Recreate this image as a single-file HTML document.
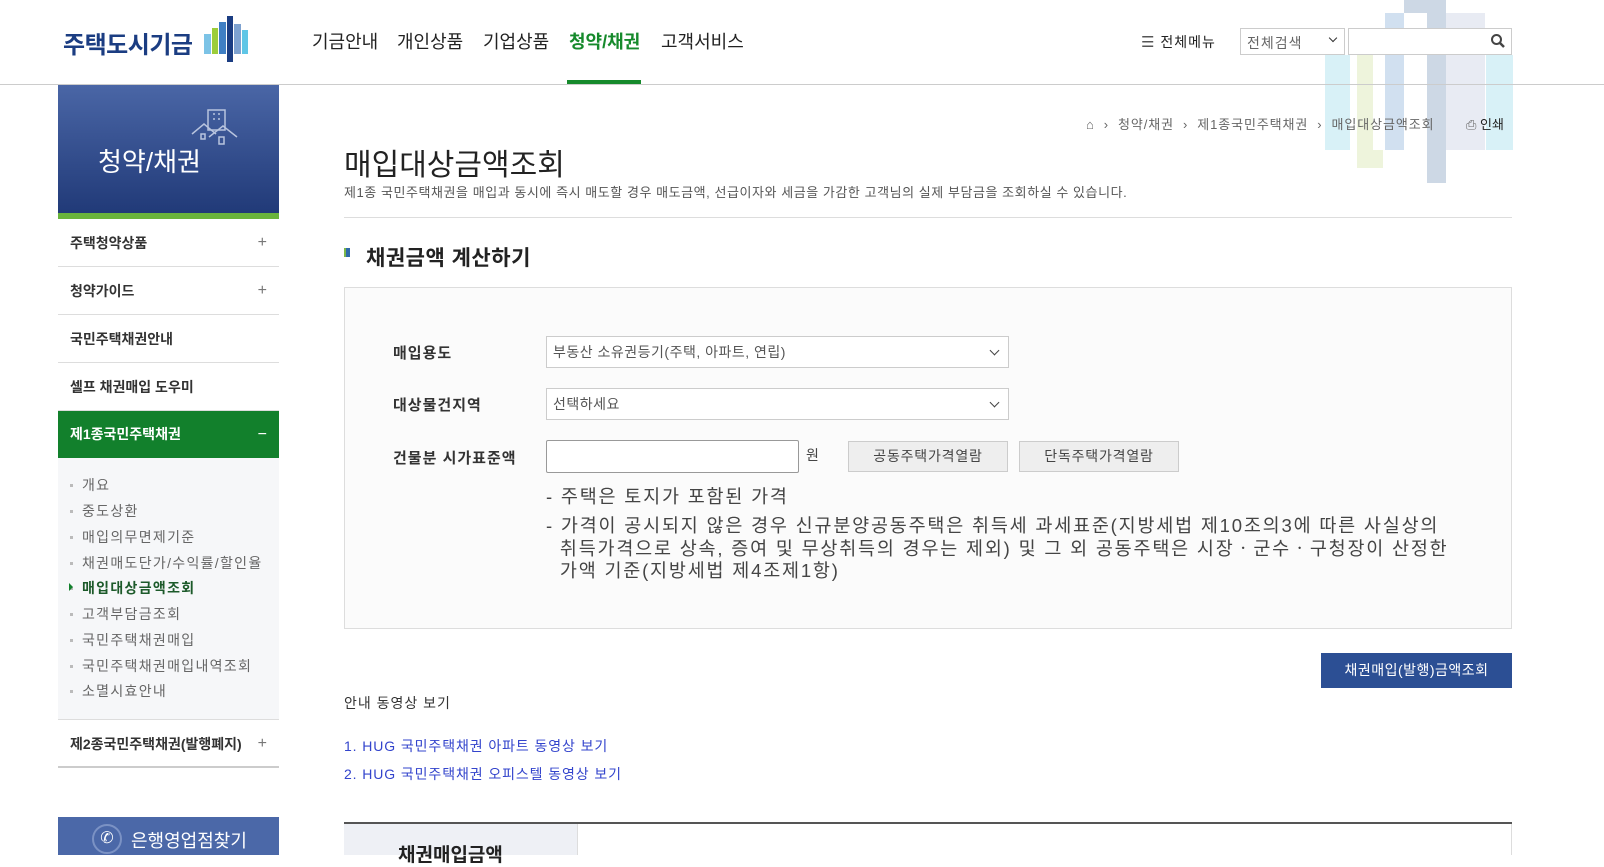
<!DOCTYPE html>
<html><head><meta charset="utf-8"><style>
*{margin:0;padding:0;box-sizing:border-box}
body{width:1604px;height:855px;overflow:hidden;background:#fff;font-family:"Liberation Sans","Noto Sans CJK KR",sans-serif;color:#333;position:relative}
.a{position:absolute;white-space:nowrap}
.bar{position:absolute}
.nav{font-size:18px;color:#222;top:28px}
.side{position:absolute;left:58px;width:221px}
.mi{position:absolute;left:58px;width:221px;height:48px;border-bottom:1px solid #ddd;font-size:14px;font-weight:bold;color:#333;padding-left:12px;line-height:48px}
.mi .p{position:absolute;right:12px;top:0;color:#777;font-weight:normal;font-size:16px}
.sub{position:absolute;left:70px;font-size:14px;color:#666;letter-spacing:1.3px}
.sub:before{content:"";position:absolute;left:0;top:9px;width:3px;height:3px;background:#bbb}
.sub span{margin-left:12px}
.sel{position:absolute;left:546px;width:463px;height:32px;border:1px solid #ccc;background:#fff;font-size:14px;color:#555;padding-left:6px;line-height:30px;letter-spacing:0.5px}
.sel:after{content:"";position:absolute;right:10px;top:10px;width:6px;height:6px;border-right:1.5px solid #444;border-bottom:1.5px solid #444;transform:rotate(45deg)}
.lbl{position:absolute;left:393px;font-size:15px;font-weight:bold;color:#333;letter-spacing:1px}
.btn{position:absolute;top:441px;height:31px;background:#eee;border:1px solid #ccc;font-size:14px;color:#444;text-align:center;line-height:29px}
.note{position:absolute;left:546px;font-size:18.5px;color:#444;line-height:22.5px;letter-spacing:1.8px;white-space:nowrap}
</style></head><body>
<div class="bar" style="left:1325px;top:55px;width:25px;height:95px;background:#d8f1f7"></div>
<div class="bar" style="left:1357px;top:55px;width:16px;height:113px;background:#eef4dc"></div>
<div class="bar" style="left:1373px;top:150px;width:10px;height:18px;background:#eef4dc"></div>
<div class="bar" style="left:1385px;top:13px;width:19px;height:137px;background:#d1e0f0"></div>
<div class="bar" style="left:1404px;top:0;width:42px;height:13px;background:#cdd8e5"></div>
<div class="bar" style="left:1427px;top:0;width:19px;height:183px;background:#cdd8e5"></div>
<div class="bar" style="left:1446px;top:13px;width:39px;height:137px;background:#e8ebf3"></div>
<div class="bar" style="left:1486px;top:55px;width:27px;height:95px;background:#d8f1f7"></div>

<div class="a" style="left:63px;top:25px;font-size:24px;font-weight:bold;color:#1b3d82;letter-spacing:-0.5px">주택도시기금</div>
<div class="bar" style="left:204px;top:34px;width:7px;height:20px;background:#7cc3e6"></div>
<div class="bar" style="left:212px;top:28px;width:6px;height:26px;background:#9ccd3a"></div>
<div class="bar" style="left:219px;top:22px;width:7px;height:32px;background:#3f7fc4"></div>
<div class="bar" style="left:227px;top:16px;width:6px;height:46px;background:#1b3d82"></div>
<div class="bar" style="left:234px;top:24px;width:7px;height:30px;background:#7ea2d0"></div>
<div class="bar" style="left:242px;top:30px;width:6px;height:24px;background:#5fc6e6"></div>
<div class="a nav" style="left:312px">기금안내</div>
<div class="a nav" style="left:397px">개인상품</div>
<div class="a nav" style="left:483px">기업상품</div>
<div class="a nav" style="left:569px;color:#168a2c;font-weight:bold">청약/채권</div>
<div class="a nav" style="left:661px">고객서비스</div>
<div class="bar" style="left:567px;top:80px;width:74px;height:4px;background:#168a2c"></div>
<div class="bar" style="left:0;top:84px;width:1604px;height:1px;background:#ccc"></div>
<div class="a" style="left:1141px;top:32px;font-size:14px;color:#222;letter-spacing:1px"><span style="font-size:15px;color:#555">☰</span> 전체메뉴</div>
<div class="bar" style="left:1240px;top:28px;width:105px;height:27px;border:1px solid #ccc;background:#fff;font-size:14px;color:#666;padding:4px 6px;letter-spacing:1px">전체검색<span style="position:absolute;right:8px;top:6px;width:6px;height:6px;border-right:1.5px solid #333;border-bottom:1.5px solid #333;transform:rotate(45deg)"></span></div>
<div class="bar" style="left:1348px;top:28px;width:164px;height:27px;border:1px solid #ccc;background:#fff"></div>
<svg class="bar" style="left:1490px;top:33px" width="16" height="16" viewBox="0 0 16 16"><circle cx="6.5" cy="6.5" r="4.5" fill="none" stroke="#444" stroke-width="2"/><path d="M10 10l4 4" stroke="#444" stroke-width="2.5"/></svg>

<div class="side" style="top:85px;height:128px;background:linear-gradient(#4a66a6,#213a78)"></div>
<div class="side" style="top:213px;height:6px;background:#6ab43c"></div>
<div class="a" style="left:98px;top:142px;font-size:26px;color:#fff">청약/채권</div>
<svg class="bar" style="left:190px;top:108px" width="55" height="45" viewBox="0 0 55 45" fill="none" stroke="#b8c4de" stroke-width="1.5"><rect x="18" y="2" width="17" height="20"/><path d="M23 6h2M28 6h2M23 11h2M28 11h2"/><path d="M2 26l12-10 12 10"/><path d="M19 29l14-11 14 11"/><path d="M11 26h4v5h-4zM29 29h5v7h-5z"/></svg>
<div class="mi" style="top:219px">주택청약상품<span class="p">+</span></div>
<div class="mi" style="top:267px">청약가이드<span class="p">+</span></div>
<div class="mi" style="top:315px">국민주택채권안내</div>
<div class="mi" style="top:363px">셀프 채권매입 도우미</div>
<div class="mi" style="top:411px;background:#12802c;color:#fff;border:none;height:47px;line-height:47px">제1종국민주택채권<span class="p" style="color:#fff">−</span></div>
<div class="side" style="top:458px;height:262px;background:#f6f7f9;border-bottom:1px solid #ddd"></div>
<div class="sub" style="top:475px"><span>개요</span></div>
<div class="sub" style="top:501px"><span>중도상환</span></div>
<div class="sub" style="top:527px"><span>매입의무면제기준</span></div>
<div class="sub" style="top:553px"><span>채권매도단가/수익률/할인율</span></div>
<div class="sub" style="top:578px;color:#1c5a2a;font-weight:bold"><span>매입대상금액조회</span></div>
<div class="a" style="left:69px;top:583px;width:0;height:0;border-left:4px solid #12802c;border-top:4px solid transparent;border-bottom:4px solid transparent"></div>
<div class="sub" style="top:604px"><span>고객부담금조회</span></div>
<div class="sub" style="top:630px"><span>국민주택채권매입</span></div>
<div class="sub" style="top:656px"><span>국민주택채권매입내역조회</span></div>
<div class="sub" style="top:681px"><span>소멸시효안내</span></div>
<div class="mi" style="top:720px;border-bottom:2px solid #ccc">제2종국민주택채권(발행폐지)<span class="p">+</span></div>
<div class="side" style="top:817px;height:38px;background:#4b68a8"></div>
<div class="a" style="left:92px;top:824px;width:30px;height:30px;border-radius:50%;border:2px solid #7b92c4;color:#fff;font-size:16px;text-align:center;line-height:26px">✆</div>
<div class="a" style="left:131px;top:827px;font-size:18px;color:#fff">은행영업점찾기</div>

<div class="a" style="left:1086px;top:114px;font-size:13px;color:#666;letter-spacing:0.9px">⌂ &nbsp;›&nbsp; 청약/채권 &nbsp;›&nbsp; 제1종국민주택채권 &nbsp;›&nbsp; 매입대상금액조회</div>
<div class="a" style="left:1466px;top:114px;font-size:13px;color:#222"><span style="color:#666">⎙</span> 인쇄</div>
<div class="a" style="left:344px;top:140px;font-size:30px;color:#222">매입대상금액조회</div>
<div class="a" style="left:344px;top:182px;font-size:13px;color:#555;letter-spacing:0.55px">제1종 국민주택채권을 매입과 동시에 즉시 매도할 경우 매도금액, 선급이자와 세금을 가감한 고객님의 실제 부담금을 조회하실 수 있습니다.</div>
<div class="bar" style="left:344px;top:217px;width:1168px;height:1px;background:#ddd"></div>
<div class="bar" style="left:344px;top:248px;width:6px;height:9px;background:#7cb84a;border-right:4px solid #2f6aa8"></div>
<div class="a" style="left:366px;top:242px;font-size:21px;font-weight:bold;color:#222;letter-spacing:0.5px">채권금액 계산하기</div>
<div class="bar" style="left:344px;top:287px;width:1168px;height:342px;background:#fbfbfb;border:1px solid #ddd"></div>
<div class="lbl" style="top:342px">매입용도</div>
<div class="sel" style="top:336px">부동산 소유권등기(주택, 아파트, 연립)</div>
<div class="lbl" style="top:394px">대상물건지역</div>
<div class="sel" style="top:388px">선택하세요</div>
<div class="lbl" style="top:447px">건물분 시가표준액</div>
<div class="bar" style="left:546px;top:440px;width:253px;height:33px;border:1px solid #999;background:#fff;border-radius:2px"></div>
<div class="a" style="left:806px;top:445px;font-size:14px;color:#444">원</div>
<div class="btn" style="left:848px;width:160px;letter-spacing:0.8px">공동주택가격열람</div>
<div class="btn" style="left:1019px;width:160px;letter-spacing:0.8px">단독주택가격열람</div>
<div class="note" style="top:486px">- 주택은 토지가 포함된 가격</div>
<div class="note" style="top:515px">- 가격이 공시되지 않은 경우 신규분양공동주택은 취득세 과세표준(지방세법 제10조의3에 따른 사실상의<br>&nbsp; 취득가격으로 상속, 증여 및 무상취득의 경우는 제외) 및 그 외 공동주택은 시장ㆍ군수ㆍ구청장이 산정한<br>&nbsp; 가액 기준(지방세법 제4조제1항)</div>
<div class="bar" style="left:1321px;top:653px;width:191px;height:35px;background:#2c4f94;color:#fff;font-size:14px;text-align:center;line-height:35px;letter-spacing:0.5px">채권매입(발행)금액조회</div>
<div class="a" style="left:344px;top:693px;font-size:14px;color:#333;letter-spacing:1px">안내 동영상 보기</div>
<div class="a" style="left:344px;top:736px;font-size:14px;color:#3344cc;letter-spacing:0.9px">1. HUG 국민주택채권 아파트 동영상 보기</div>
<div class="a" style="left:344px;top:764px;font-size:14px;color:#3344cc;letter-spacing:0.9px">2. HUG 국민주택채권 오피스텔 동영상 보기</div>
<div class="bar" style="left:344px;top:822px;width:1168px;height:2px;background:#555"></div>
<div class="bar" style="left:344px;top:824px;width:234px;height:31px;background:#eef0f5;border-right:1px solid #ddd"></div>
<div class="bar" style="left:1511px;top:824px;width:1px;height:31px;background:#ddd"></div>
<div class="a" style="left:398px;top:840px;font-size:19px;font-weight:bold;color:#222">채권매입금액</div>
</body></html>
